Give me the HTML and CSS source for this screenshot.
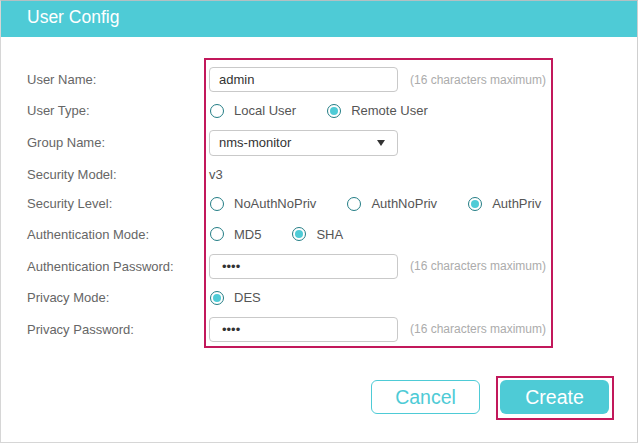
FILE: index.html
```html
<!DOCTYPE html>
<html>
<head>
<meta charset="utf-8">
<link rel="stylesheet" href="styles.css">
</head>
<body>
<div class="dialog">
  <div class="header">User Config</div>
  <div class="form">
    <div class="labels">
      <div class="row h31">User Name:</div>
      <div class="row h31">User Type:</div>
      <div class="row h33">Group Name:</div>
      <div class="row h30">Security Model:</div>
      <div class="row h29">Security Level:</div>
      <div class="row h32">Authentication Mode:</div>
      <div class="row h32">Authentication Password:</div>
      <div class="row h31">Privacy Mode:</div>
      <div class="row h32">Privacy Password:</div>
    </div>
    <div class="fields">
      <div class="row h31">
        <input class="input" type="text" value="admin">
        <span class="hint">(16 characters maximum)</span>
      </div>
      <div class="row h31">
        <label class="opt"><span class="radio"></span>Local User</label>
        <label class="opt"><span class="radio checked"></span>Remote User</label>
      </div>
      <div class="row h33">
        <div class="select"><span>nms-monitor</span><span class="caret"></span></div>
      </div>
      <div class="row h30"><span class="plain">v3</span></div>
      <div class="row h29">
        <label class="opt"><span class="radio"></span>NoAuthNoPriv</label>
        <label class="opt"><span class="radio"></span>AuthNoPriv</label>
        <label class="opt"><span class="radio checked"></span>AuthPriv</label>
      </div>
      <div class="row h32">
        <label class="opt"><span class="radio"></span>MD5</label>
        <label class="opt"><span class="radio checked"></span>SHA</label>
      </div>
      <div class="row h32">
        <input class="input pw" type="password" value="1234">
        <span class="hint">(16 characters maximum)</span>
      </div>
      <div class="row h31">
        <label class="opt"><span class="radio checked"></span>DES</label>
      </div>
      <div class="row h32">
        <input class="input pw" type="password" value="1234">
        <span class="hint">(16 characters maximum)</span>
      </div>
    </div>
  </div>
  <div class="actions">
    <button class="btn cancel">Cancel</button>
    <div class="highlight"><button class="btn create">Create</button></div>
  </div>
</div>
</body>
</html>
```
FILE: styles.css
```css
* { box-sizing: border-box; }
body {
  margin: 0;
  background: #fff;
  font-family: "Liberation Sans", Arial, sans-serif;
}
.dialog {
  width: 638px;
  height: 443px;
  border: 1px solid #d6d6d6;
  border-top-color: #b3c0c3;
  border-right-color: #cfcfcf;
}
.header {
  height: 36px;
  line-height: 32px;
  padding-left: 26px;
  background: #4ecbd6;
  color: #fff;
  font-size: 17.5px;
}
.form {
  display: flex;
  margin-top: 21px;
}
.labels {
  width: 203px;
  padding-left: 26px;
  padding-top: 6px;
  font-size: 13px;
  color: #666;
}
.fields {
  width: 349px;
  border: 2px solid #c2185b;
  padding: 4px 0 1px 3px;
  font-size: 13px;
  color: #555;
}
.row {
  display: flex;
  align-items: center;
  white-space: nowrap;
}
.h29 { height: 29px; }
.h30 { height: 30px; }
.h31 { height: 31px; }
.h32 { height: 32px; }
.h33 { height: 33px; }
.input {
  width: 189px;
  height: 25px;
  border: 1px solid #c9c9c9;
  border-radius: 4px;
  padding: 0 9px;
  font: 13px "Liberation Sans", Arial, sans-serif;
  color: #333;
  outline: none;
}
.input.pw {
  padding-left: 12px;
  font-size: 13px;
  letter-spacing: 0;
}
.hint {
  margin-left: 12px;
  font-size: 12px;
  color: #acacac;
}
.opt {
  display: flex;
  align-items: center;
  margin-right: 30px;
  color: #555;
}
.radio {
  width: 14px;
  height: 14px;
  margin-left: 1px;
  margin-right: 10px;
  border: 1.3px solid #237d85;
  border-radius: 50%;
  display: flex;
  align-items: center;
  justify-content: center;
}
.radio.checked::after {
  content: "";
  width: 8px;
  height: 8px;
  border-radius: 50%;
  background: #4ecbd6;
}
.select {
  width: 189px;
  height: 26px;
  border: 1px solid #c9c9c9;
  border-radius: 4px;
  padding: 0 12px 0 9px;
  display: flex;
  align-items: center;
  justify-content: space-between;
  color: #333;
}
.caret {
  width: 0;
  height: 0;
  border-left: 4.5px solid transparent;
  border-right: 4.5px solid transparent;
  border-top: 6px solid #333;
  margin-top: 1px;
}
.plain { color: #555; }
.actions {
  display: flex;
  justify-content: flex-end;
  align-items: flex-start;
  margin-top: 28px;
  padding-right: 23px;
}
.btn {
  width: 109px;
  height: 34px;
  border-radius: 6px;
  font: 19.5px "Liberation Sans", Arial, sans-serif;
  padding: 0;
  cursor: pointer;
}
.cancel {
  margin-top: 4px;
  margin-right: 16px;
  background: #fff;
  border: 1px solid #4ecbd6;
  color: #4ecbd6;
}
.highlight {
  border: 2px solid #c2185b;
  padding: 2px 3px 4px 2px;
  display: flex;
}
.create {
  background: #4ecbd6;
  border: none;
  color: #fff;
}
```
